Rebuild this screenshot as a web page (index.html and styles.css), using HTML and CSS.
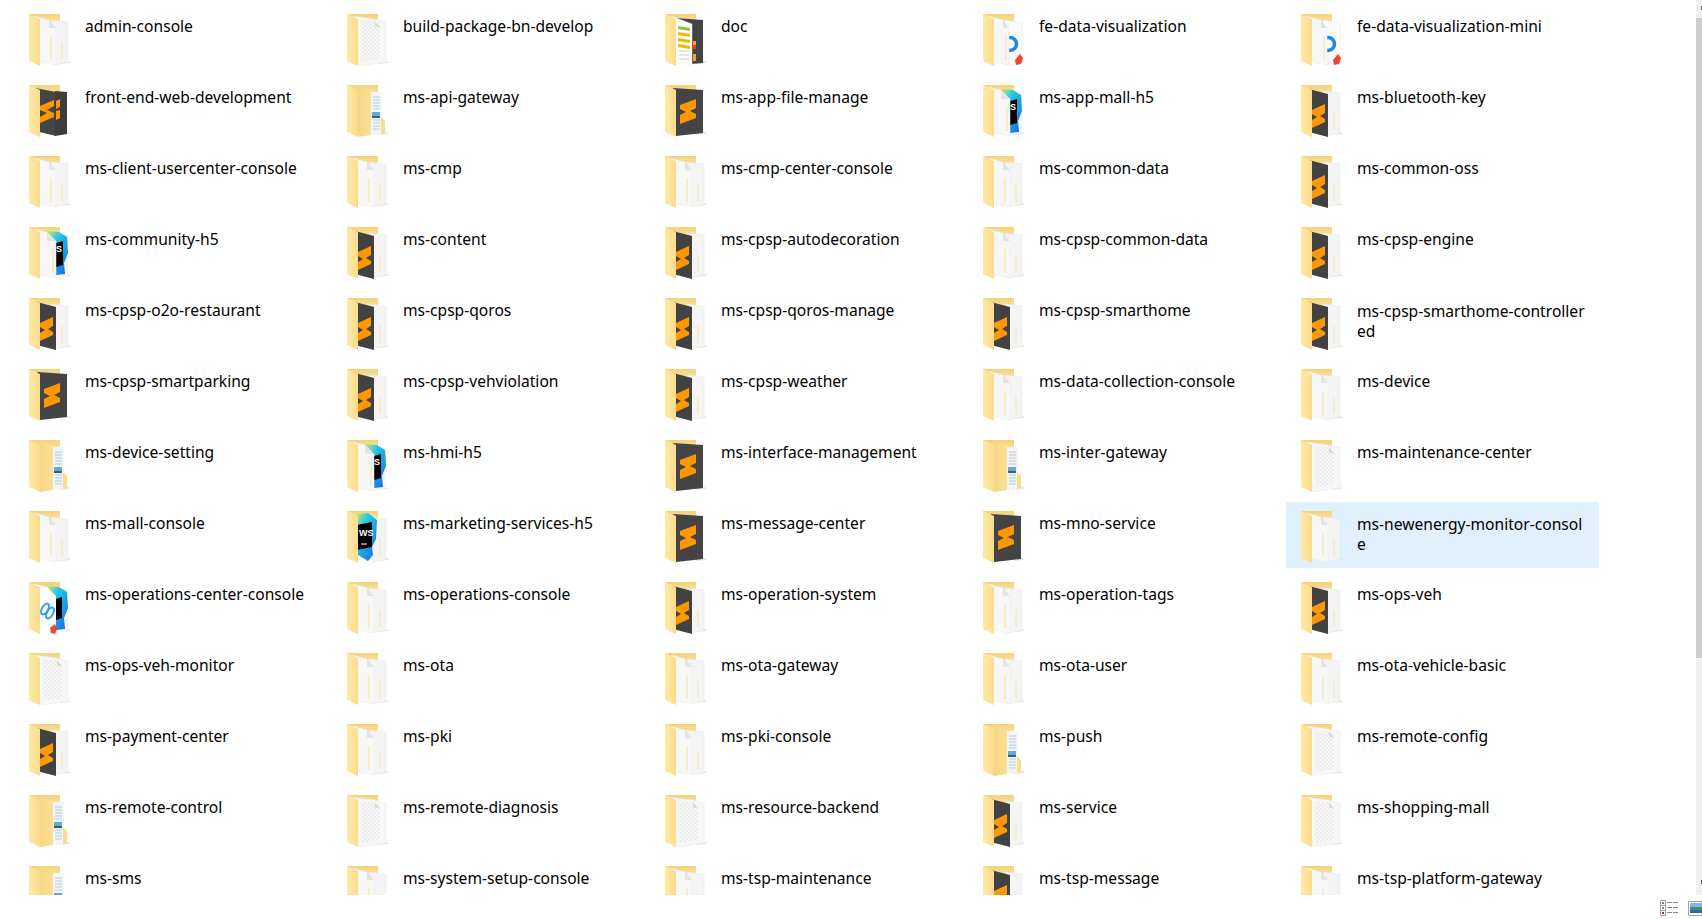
FILE: index.html
```html
<!DOCTYPE html>
<html lang="en">
<head>
    <meta charset="UTF-8">
    <meta name="viewport" content="width=device-width, initial-scale=1.0">
    <title>Projects</title>
    <link rel="stylesheet" href="styles.css">
</head>
<body>
    <!-- folder icons, reused by every item -->
    <svg class="defs" width="0" height="0">
        <defs>
            <linearGradient id="back" x1="0" y1="0" x2="0" y2="1">
                <stop offset="0" stop-color="#f3d27a"/>
                <stop offset="1" stop-color="#fbe09a"/>
            </linearGradient>
            <linearGradient id="front" x1="0" y1="0" x2="1" y2="0">
                <stop offset="0" stop-color="#ffe9a8"/>
                <stop offset="1" stop-color="#fbdc8c"/>
            </linearGradient>
            <linearGradient id="flap" x1="0" y1="0" x2="1" y2="0">
                <stop offset="0" stop-color="#f4d27e"/>
                <stop offset="1" stop-color="#fbdf94"/>
            </linearGradient>
            <linearGradient id="jb" x1="0" y1="0" x2="1" y2="1">
                <stop offset="0" stop-color="#e8f04a"/>
                <stop offset="0.35" stop-color="#22c8e8"/>
                <stop offset="1" stop-color="#1466e0"/>
            </linearGradient>
            <pattern id="dots" width="4" height="4" patternUnits="userSpaceOnUse">
                <rect width="4" height="4" fill="#f6f7f7"/>
                <path d="M0 2 2 0 4 2 2 4Z" fill="none" stroke="#e4e6e6" stroke-width=".6"/>
            </pattern>

            <g id="f-back">
                <path d="M0 0H31V8H0Z" fill="url(#back)"/>
                <path d="M31 50 42 49 40 47H31Z" fill="#e8e8e8"/>
            </g>
            <path id="f-front" d="M0 0 11 5V52L0 47Z" fill="url(#front)"/>

            <symbol id="plain" viewBox="0 0 42 52">
                <use href="#f-back"/>
                <path d="M22 6 39 8V48L26 51Z" fill="#f4f4f4" stroke="#e6e6e6" stroke-width=".5"/>
                <path d="M33 28V45" stroke="#f6e2a0"/>
                <path d="M6 2 20 6 27 14V51L6 47Z" fill="#f7f7f7" stroke="#e8e8e8" stroke-width=".5"/>
                <path d="M20 6V14H27Z" fill="#e4e4e4"/>
                <path d="M22 22V46" stroke="#f8e09a"/>
                <use href="#f-front"/>
            </symbol>

            <symbol id="pattern" viewBox="0 0 42 52">
                <use href="#f-back"/>
                <path d="M6 2 27 5 39 8V48L12 52Z" fill="#f7f7f7" stroke="#e6e6e6" stroke-width=".5"/>
                <path d="M14 6 28 7 33 13V45L14 48Z" fill="url(#dots)"/>
                <path d="M28 7V13H33Z" fill="#dcdcdc"/>
                <use href="#f-front"/>
            </symbol>

            <symbol id="closed" viewBox="0 0 42 52">
                <use href="#f-back"/>
                <path d="M24 7H35V49L24 50Z" fill="#f4f4f4"/>
                <path d="M26 12H33M26 15H33M26 18H33M26 21H33M26 24H33M26 35H33M26 38H33M26 41H33M26 44H33" stroke="#a8cfe8"/>
                <path d="M25 27H33V31H25Z" fill="#62a8dc"/>
                <path d="M25 31H33V33H25Z" fill="#3f5f6a"/>
                <path d="M34 32 38 36V48L34 49Z" fill="#f9dc8c"/>
                <path d="M5 2 24 6V50L11 52Z" fill="url(#flap)"/>
                <use href="#f-front"/>
            </symbol>

            <symbol id="half" viewBox="0 0 42 52">
                <use href="#f-back"/>
                <path d="M22 6 39 8V48L26 51Z" fill="#f4f4f4" stroke="#e6e6e6" stroke-width=".5"/>
                <path d="M33 28V45" stroke="#f6e2a0"/>
                <path d="M4 3 27 9V52L4 46Z" fill="#424242"/>
                <path d="M11 25 24 19V28L19 31 24 34V37L11 43V35L16 32 11 29Z" fill="#ff9800"/>
                <use href="#f-front"/>
            </symbol>

            <symbol id="double" viewBox="0 0 42 52">
                <use href="#f-back"/>
                <path d="M6 3 27 7V51L6 46Z" fill="#454545"/>
                <path d="M26 6 38 7V49L26 51Z" fill="#3d3d3d"/>
                <path d="M27 16 31 14V22L27 24ZM27 26 31 25V33L27 35Z" fill="#ff9800"/>
                <path d="M11 21 25 15V21L18 25 25 28V32L11 38V32L18 28 11 25Z" fill="#ff9800"/>
                <use href="#f-front"/>
            </symbol>

            <symbol id="big" viewBox="0 0 42 52">
                <use href="#f-back"/>
                <path d="M8 3 38 5V48L11 51Z" fill="#444"/>
                <path d="M15 20 31 14V23L25 26 31 29V33L15 39V30L21 27 15 24Z" fill="#ff9800"/>
                <use href="#f-front"/>
            </symbol>

            <symbol id="sheet" viewBox="0 0 42 52">
                <use href="#f-back"/>
                <path d="M10 4 38 6V49L26 50Z" fill="#444"/>
                <path d="M28 27H31V33H28ZM28 40H31V47H28Z" fill="#f4a62a"/>
                <path d="M6 2 27 10V51L6 47Z" fill="#fff" stroke="#e8e8e8" stroke-width=".5"/>
                <path d="M13 12 25 14V17L13 15Z" fill="#8cc63f"/>
                <path d="M13 18 25 20V23L13 21Z" fill="#f4b400"/>
                <path d="M13 24 25 26V29L13 27Z" fill="#f4b400"/>
                <path d="M13 30 25 32V35L13 33Z" fill="#f4b400"/>
                <path d="M14 37H24M14 41H24M14 45H24" stroke="#ccc"/>
                <path d="M27 31H31V35H27Z" fill="#e33"/>
                <use href="#f-front"/>
            </symbol>

            <symbol id="ring" viewBox="0 0 42 52">
                <use href="#f-back"/>
                <path d="M22 6 39 9V48L27 52Z" fill="#fbfbfb" stroke="#e6e6e6" stroke-width=".5"/>
                <circle cx="27" cy="30" r="6.500" fill="none" stroke="#1e88e5" stroke-width="3.500"/>
                <path d="M32 46 37 40 40 44 38 50 33 51Z" fill="#f44336"/>
                <path d="M6 2 20 6 26 14V51L6 47Z" fill="#f7f7f7" stroke="#e8e8e8" stroke-width=".5"/>
                <path d="M20 6V14H26Z" fill="#e4e4e4"/>
                <path d="M23 22V46" stroke="#f8e09a"/>
                <use href="#f-front"/>
            </symbol>

            <symbol id="ws" viewBox="0 0 42 52">
                <use href="#f-back"/>
                <path d="M22 6 39 8V48L27 51Z" fill="#f4f4f4"/>
                <path d="M16 4 30 5 38 10 39 26 35 36 36 47 27 48Z" fill="url(#jb)"/>
                <path d="M24 17 34 14V38L24 41Z" fill="#000"/>
                <path d="M6 2 18 5 27 14V51L6 47Z" fill="#f7f7f7" stroke="#e8e8e8" stroke-width=".5"/>
                <path d="M18 5V14H27Z" fill="#e4e4e4"/>
                <path d="M24 22V46" stroke="#f8e09a"/>
                <text class="ws-mark" x="27" y="25">S</text>
                <use href="#f-front"/>
            </symbol>

            <symbol id="wsbig" viewBox="0 0 42 52">
                <use href="#f-back"/>
                <path d="M22 6 39 8V48L26 51Z" fill="#f4f4f4" stroke="#e6e6e6" stroke-width=".5"/>
                <path d="M33 28V45" stroke="#f6e2a0"/>
                <path d="M7 4 21 2 30 9 29 28 25 36 26 44 21 50 11 44Z" fill="url(#jb)"/>
                <path d="M10 14 25 11V36L10 39Z" fill="#000"/>
                <text class="ws-mark" x="12" y="25">WS</text>
                <path d="M14 33H20" stroke="#fff"/>
                <use href="#f-front"/>
            </symbol>

            <symbol id="wsring" viewBox="0 0 42 52">
                <use href="#f-back"/>
                <path d="M22 6 39 8V48L27 51Z" fill="#f4f4f4"/>
                <path d="M16 4 30 5 38 10 39 26 35 36 36 47 27 48Z" fill="url(#jb)"/>
                <path d="M27 17 33 15V36L27 38Z" fill="#000"/>
                <path d="M6 2 18 5 27 14V51L6 47Z" fill="#fff"/>
                <ellipse cx="16" cy="27" rx="3" ry="6" transform="rotate(30 16 27)" fill="none" stroke="#29a5e8" stroke-width="2"/>
                <ellipse cx="21" cy="31" rx="3" ry="6" transform="rotate(30 21 31)" fill="none" stroke="#29a5e8" stroke-width="2"/>
                <path d="M21 46 26 42 28 47 26 52 22 51Z" fill="#f44336"/>
                <use href="#f-front"/>
            </symbol>
        </defs>
    </svg>

    <div class="window">
        <div class="main">
            <div class="lista">
                <div class="item"><svg class="icone"><use href="#plain"/></svg><span class="nome">admin-console</span></div>
                <div class="item"><svg class="icone"><use href="#pattern"/></svg><span class="nome">build-package-bn-develop</span></div>
                <div class="item"><svg class="icone"><use href="#sheet"/></svg><span class="nome">doc</span></div>
                <div class="item"><svg class="icone"><use href="#ring"/></svg><span class="nome">fe-data-visualization</span></div>
                <div class="item"><svg class="icone"><use href="#ring"/></svg><span class="nome">fe-data-visualization-mini</span></div>

                <div class="item"><svg class="icone"><use href="#double"/></svg><span class="nome">front-end-web-development</span></div>
                <div class="item"><svg class="icone"><use href="#closed"/></svg><span class="nome">ms-api-gateway</span></div>
                <div class="item"><svg class="icone"><use href="#big"/></svg><span class="nome">ms-app-file-manage</span></div>
                <div class="item"><svg class="icone"><use href="#ws"/></svg><span class="nome">ms-app-mall-h5</span></div>
                <div class="item"><svg class="icone"><use href="#half"/></svg><span class="nome">ms-bluetooth-key</span></div>

                <div class="item"><svg class="icone"><use href="#plain"/></svg><span class="nome">ms-client-usercenter-console</span></div>
                <div class="item"><svg class="icone"><use href="#plain"/></svg><span class="nome">ms-cmp</span></div>
                <div class="item"><svg class="icone"><use href="#plain"/></svg><span class="nome">ms-cmp-center-console</span></div>
                <div class="item"><svg class="icone"><use href="#plain"/></svg><span class="nome">ms-common-data</span></div>
                <div class="item"><svg class="icone"><use href="#half"/></svg><span class="nome">ms-common-oss</span></div>

                <div class="item"><svg class="icone"><use href="#ws"/></svg><span class="nome">ms-community-h5</span></div>
                <div class="item"><svg class="icone"><use href="#half"/></svg><span class="nome">ms-content</span></div>
                <div class="item"><svg class="icone"><use href="#half"/></svg><span class="nome">ms-cpsp-autodecoration</span></div>
                <div class="item"><svg class="icone"><use href="#plain"/></svg><span class="nome">ms-cpsp-common-data</span></div>
                <div class="item"><svg class="icone"><use href="#half"/></svg><span class="nome">ms-cpsp-engine</span></div>

                <div class="item"><svg class="icone"><use href="#half"/></svg><span class="nome">ms-cpsp-o2o-restaurant</span></div>
                <div class="item"><svg class="icone"><use href="#half"/></svg><span class="nome">ms-cpsp-qoros</span></div>
                <div class="item"><svg class="icone"><use href="#half"/></svg><span class="nome">ms-cpsp-qoros-manage</span></div>
                <div class="item"><svg class="icone"><use href="#half"/></svg><span class="nome">ms-cpsp-smarthome</span></div>
                <div class="item longo"><svg class="icone"><use href="#half"/></svg><span class="nome">ms-cpsp-smarthome-controllered</span></div>

                <div class="item"><svg class="icone"><use href="#big"/></svg><span class="nome">ms-cpsp-smartparking</span></div>
                <div class="item"><svg class="icone"><use href="#half"/></svg><span class="nome">ms-cpsp-vehviolation</span></div>
                <div class="item"><svg class="icone"><use href="#half"/></svg><span class="nome">ms-cpsp-weather</span></div>
                <div class="item"><svg class="icone"><use href="#plain"/></svg><span class="nome">ms-data-collection-console</span></div>
                <div class="item"><svg class="icone"><use href="#plain"/></svg><span class="nome">ms-device</span></div>

                <div class="item"><svg class="icone"><use href="#closed"/></svg><span class="nome">ms-device-setting</span></div>
                <div class="item"><svg class="icone"><use href="#ws"/></svg><span class="nome">ms-hmi-h5</span></div>
                <div class="item"><svg class="icone"><use href="#big"/></svg><span class="nome">ms-interface-management</span></div>
                <div class="item"><svg class="icone"><use href="#closed"/></svg><span class="nome">ms-inter-gateway</span></div>
                <div class="item"><svg class="icone"><use href="#pattern"/></svg><span class="nome">ms-maintenance-center</span></div>

                <div class="item"><svg class="icone"><use href="#plain"/></svg><span class="nome">ms-mall-console</span></div>
                <div class="item"><svg class="icone"><use href="#wsbig"/></svg><span class="nome">ms-marketing-services-h5</span></div>
                <div class="item"><svg class="icone"><use href="#big"/></svg><span class="nome">ms-message-center</span></div>
                <div class="item"><svg class="icone"><use href="#big"/></svg><span class="nome">ms-mno-service</span></div>
                <div class="item longo selecionado"><svg class="icone"><use href="#plain"/></svg><span class="nome">ms-newenergy-monitor-console</span></div>

                <div class="item"><svg class="icone"><use href="#wsring"/></svg><span class="nome">ms-operations-center-console</span></div>
                <div class="item"><svg class="icone"><use href="#plain"/></svg><span class="nome">ms-operations-console</span></div>
                <div class="item"><svg class="icone"><use href="#half"/></svg><span class="nome">ms-operation-system</span></div>
                <div class="item"><svg class="icone"><use href="#plain"/></svg><span class="nome">ms-operation-tags</span></div>
                <div class="item"><svg class="icone"><use href="#half"/></svg><span class="nome">ms-ops-veh</span></div>

                <div class="item"><svg class="icone"><use href="#pattern"/></svg><span class="nome">ms-ops-veh-monitor</span></div>
                <div class="item"><svg class="icone"><use href="#plain"/></svg><span class="nome">ms-ota</span></div>
                <div class="item"><svg class="icone"><use href="#plain"/></svg><span class="nome">ms-ota-gateway</span></div>
                <div class="item"><svg class="icone"><use href="#plain"/></svg><span class="nome">ms-ota-user</span></div>
                <div class="item"><svg class="icone"><use href="#plain"/></svg><span class="nome">ms-ota-vehicle-basic</span></div>

                <div class="item"><svg class="icone"><use href="#half"/></svg><span class="nome">ms-payment-center</span></div>
                <div class="item"><svg class="icone"><use href="#plain"/></svg><span class="nome">ms-pki</span></div>
                <div class="item"><svg class="icone"><use href="#plain"/></svg><span class="nome">ms-pki-console</span></div>
                <div class="item"><svg class="icone"><use href="#closed"/></svg><span class="nome">ms-push</span></div>
                <div class="item"><svg class="icone"><use href="#pattern"/></svg><span class="nome">ms-remote-config</span></div>

                <div class="item"><svg class="icone"><use href="#closed"/></svg><span class="nome">ms-remote-control</span></div>
                <div class="item"><svg class="icone"><use href="#pattern"/></svg><span class="nome">ms-remote-diagnosis</span></div>
                <div class="item"><svg class="icone"><use href="#pattern"/></svg><span class="nome">ms-resource-backend</span></div>
                <div class="item"><svg class="icone"><use href="#half"/></svg><span class="nome">ms-service</span></div>
                <div class="item"><svg class="icone"><use href="#pattern"/></svg><span class="nome">ms-shopping-mall</span></div>

                <div class="item"><svg class="icone"><use href="#closed"/></svg><span class="nome">ms-sms</span></div>
                <div class="item"><svg class="icone"><use href="#plain"/></svg><span class="nome">ms-system-setup-console</span></div>
                <div class="item"><svg class="icone"><use href="#plain"/></svg><span class="nome">ms-tsp-maintenance</span></div>
                <div class="item"><svg class="icone"><use href="#half"/></svg><span class="nome">ms-tsp-message</span></div>
                <div class="item"><svg class="icone"><use href="#plain"/></svg><span class="nome">ms-tsp-platform-gateway</span></div>
            </div>
            <div class="scrollbar">
                <div class="seta"></div>
                <div class="thumb"></div>
                <div class="seta baixo"></div>
            </div>
        </div>
        <div class="rodape">
            <svg class="view" width="18" height="16" viewBox="0 0 18 16">
                <path d="M.5.5H5.500V15.500H.5ZM.5 5.500H5.500M.5 10.500H5.500" fill="#fff" stroke="#a0a0a0"/>
                <path d="M2 2H4V4H2Z" fill="#5a8aa0"/>
                <path d="M2 7H4V9H2Z" fill="#7a9a50"/>
                <path d="M2 12H4V14H2Z" fill="#c02020"/>
                <path d="M7 2.500H12M13 2.500H18M7 7.500H12M13 7.500H18M7 12.500H12M13 12.500H18" stroke="#8a8a8a"/>
            </svg>
            <svg class="view" width="14" height="15" viewBox="0 0 14 15">
                <path d="M.5.5H14V14.500H.5Z" fill="#fff" stroke="#a0a0a0"/>
                <path d="M2 2H14V6H2Z" fill="#7ab8f0"/>
                <path d="M2 6H14V9H2Z" fill="#4a8a70"/>
                <path d="M2 9H14V12H2Z" fill="#2a6aa0"/>
            </svg>
        </div>
    </div>
</body>
</html>
```

FILE: styles.css
```css
* {
    margin: 0;
    padding: 0;
    box-sizing: border-box;
}

body {
    background-color: #fff;
    font-family: "Noto Sans", "Open Sans", sans-serif;
    overflow: hidden;
}

.defs {
    display: block;
    height: 0;
}

.window {
    display: flex;
    flex-direction: column;
    height: 919px;
}

.main {
    display: flex;
    height: 895px;
    overflow: hidden;
}

.lista {
    flex: 1;
    display: grid;
    grid-template-columns: repeat(5, 313px);
    grid-auto-rows: 66px;
    column-gap: 5px;
    row-gap: 5px;
    padding: 5px 0 0 14px;
}

.item {
    display: flex;
    gap: 14px;
    padding: 9px 13px 0 15px;
    color: #000;
    font-size: 15.6px;
    line-height: 20px;
}

.selecionado {
    background-color: #e1f0fd;
}

.icone {
    flex: none;
    width: 42px;
    height: 52px;
}

.nome {
    word-break: break-all;
    padding-top: 2px;
}

.longo .nome {
    padding-top: 3px;
}

.ws-mark {
    font-family: "Liberation Sans", sans-serif;
    font-size: 9px;
    font-weight: bold;
    fill: #fff;
}

.scrollbar {
    flex: none;
    display: flex;
    flex-direction: column;
    width: 6px;
    background-color: #f0f0f0;
}

.seta {
    flex: none;
    display: flex;
    justify-content: flex-end;
    align-items: center;
    height: 18px;
    padding-bottom: 2px;
}

.seta::after {
    content: "";
    width: 1px;
    height: 4px;
    background-color: #606060;
}

.baixo {
    margin-top: auto;
    padding-bottom: 8px;
}

.thumb {
    height: 640px;
    background-color: #cdcdcd;
}

.rodape {
    flex: 1;
    display: flex;
    justify-content: flex-end;
    align-items: center;
    gap: 10px;
    padding-top: 2px;
}
```
